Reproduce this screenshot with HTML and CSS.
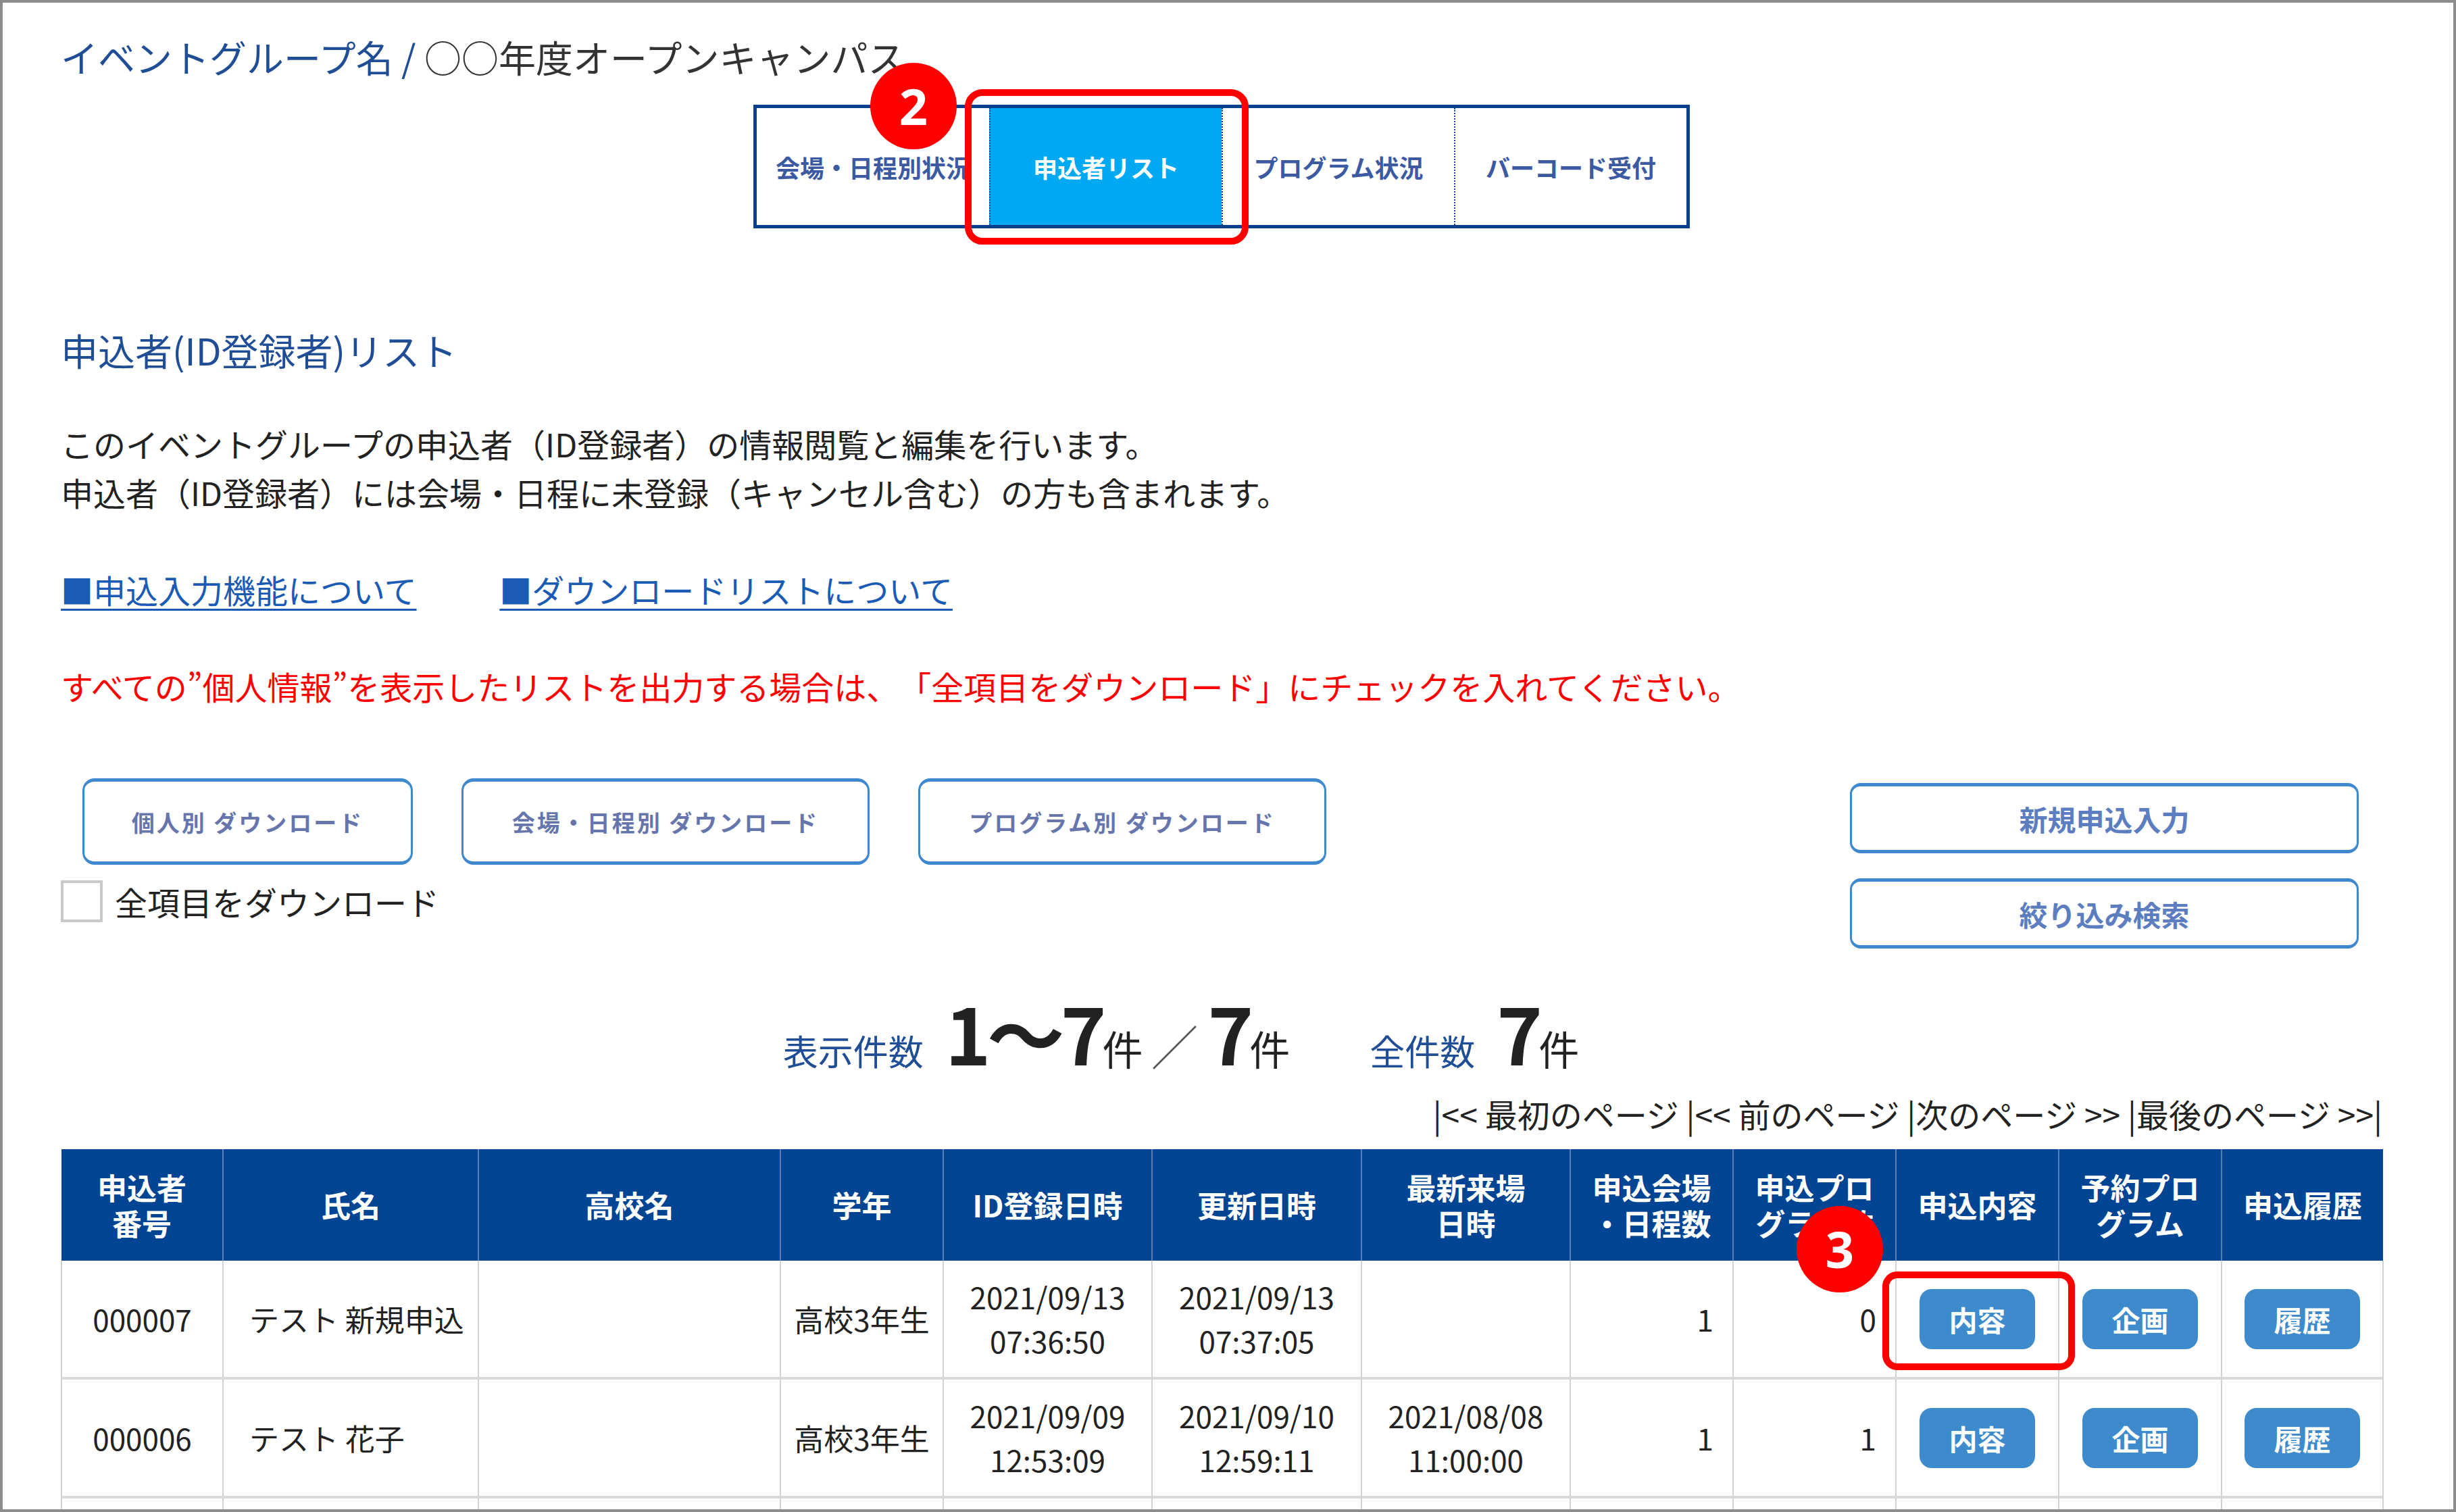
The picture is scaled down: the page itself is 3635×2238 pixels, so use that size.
FILE: index.html
```html
<!DOCTYPE html>
<html lang="ja">
<head>
    <meta charset="utf-8">
    <title>申込者リスト</title>
    <link rel="stylesheet" href="styles.css">
</head>
<body>
<div class="page">
    <!-- event name -->
    <h1 class="event-title"><span class="group">イベントグループ名 /</span> ○○年度オープンキャンパス</h1>

    <!-- menu tabs -->
    <nav class="tabs">
        <a class="tab" href="#">会場・日程別状況</a>
        <a class="tab active" href="#">申込者リスト</a>
        <a class="tab" href="#">プログラム状況</a>
        <a class="tab" href="#">バーコード受付</a>
        <span class="mark-box mark-tab"></span>
        <span class="badge badge-tab">2</span>
    </nav>

    <h2 class="sec-title">申込者(ID登録者)リスト</h2>

    <p class="lead">このイベントグループの申込者（ID登録者）の情報閲覧と編集を行います。<br>
        申込者（ID登録者）には会場・日程に未登録（キャンセル含む）の方も含まれます。</p>

    <p class="links">
        <a href="#">■申込入力機能について</a>
        <a href="#">■ダウンロードリストについて</a>
    </p>

    <p class="warn">すべての”個人情報”を表示したリストを出力する場合は、「全項目をダウンロード」にチェックを入れてください。</p>

    <!-- download / search buttons -->
    <div class="actions">
        <div class="dl-col">
            <div class="dl-row">
                <a class="btn-dl" href="#">個人別 ダウンロード</a>
                <a class="btn-dl" href="#">会場・日程別 ダウンロード</a>
                <a class="btn-dl" href="#">プログラム別 ダウンロード</a>
            </div>
            <label class="all-check"><input type="checkbox">全項目をダウンロード</label>
        </div>
        <div class="side-col">
            <a class="btn-side" href="#">新規申込入力</a>
            <a class="btn-side" href="#">絞り込み検索</a>
        </div>
    </div>

    <!-- counts -->
    <div class="count">
        <span class="lbl">表示件数</span>
        <span class="num first">1〜7</span><span class="unit">件</span>
        <span class="slash">／</span>
        <span class="num">7</span><span class="unit">件</span>
        <span class="lbl total">全件数</span>
        <span class="num first">7</span><span class="unit">件</span>
    </div>

    <div class="pager">|&lt;&lt; 最初のページ |&lt;&lt; 前のページ |次のページ &gt;&gt; |最後のページ &gt;&gt;|</div>

    <!-- applicant list -->
    <table class="list">
        <colgroup>
            <col style="width:239px"><col style="width:378px"><col style="width:447px">
            <col style="width:241px"><col style="width:309px"><col style="width:310px">
            <col style="width:309px"><col style="width:241px"><col style="width:241px">
            <col style="width:241px"><col style="width:241px"><col style="width:239px">
        </colgroup>
        <thead>
            <tr>
                <th>申込者<br>番号</th>
                <th>氏名</th>
                <th>高校名</th>
                <th>学年</th>
                <th>ID登録日時</th>
                <th>更新日時</th>
                <th>最新来場<br>日時</th>
                <th>申込会場<br>・日程数</th>
                <th>申込プロ<br>グラム数</th>
                <th>申込内容</th>
                <th>予約プロ<br>グラム</th>
                <th>申込履歴</th>
            </tr>
        </thead>
        <tbody>
            <tr>
                <td class="c">000007</td>
                <td class="name">テスト 新規申込</td>
                <td></td>
                <td class="c">高校3年生</td>
                <td class="c">2021/09/13<br>07:36:50</td>
                <td class="c">2021/09/13<br>07:37:05</td>
                <td class="c"></td>
                <td class="r">1</td>
                <td class="r">0</td>
                <td class="c">
                    <a class="btn-row marked" href="#">内容<span class="mark-box mark-row"></span><span class="badge badge-row">3</span></a>
                </td>
                <td class="c"><a class="btn-row" href="#">企画</a></td>
                <td class="c"><a class="btn-row" href="#">履歴</a></td>
            </tr>
            <tr>
                <td class="c">000006</td>
                <td class="name">テスト 花子</td>
                <td></td>
                <td class="c">高校3年生</td>
                <td class="c">2021/09/09<br>12:53:09</td>
                <td class="c">2021/09/10<br>12:59:11</td>
                <td class="c">2021/08/08<br>11:00:00</td>
                <td class="r">1</td>
                <td class="r">1</td>
                <td class="c"><a class="btn-row" href="#">内容</a></td>
                <td class="c"><a class="btn-row" href="#">企画</a></td>
                <td class="c"><a class="btn-row" href="#">履歴</a></td>
            </tr>
            <!-- next row only starts at the bottom edge -->
            <tr>
                <td></td><td></td><td></td><td></td><td></td><td></td>
                <td></td><td></td><td></td><td></td><td></td><td></td>
            </tr>
        </tbody>
    </table>
</div>
</body>
</html>
```

FILE: styles.css
```css
/* base */
body {
    margin: 0;
    font-family: "Noto Sans CJK JP", "Noto Sans", sans-serif;
    color: #222;
    background: #fff;
    text-spacing-trim: space-all;
}

a {
    text-decoration: none;
}

/* the framed page */
.page {
    box-sizing: border-box;
    height: 100vh;
    border: 4px solid #8c8c8c;
    padding: 41px 105px 0 86px;
    overflow: hidden;
}

/* event name */
.event-title {
    margin: 0;
    font-size: 55px;
    font-weight: normal;
    line-height: 76px;
    color: #333;
}
.event-title .group {
    color: #1f4e96;
}

/* menu tabs */
.tabs {
    position: relative;
    display: grid;
    grid-template-columns: repeat(4, 1fr);
    width: 1386px;
    height: 183px;
    box-sizing: border-box;
    margin: 34px auto 0;
    border: 5px solid #0a3f8e;
}
.tab {
    display: flex;
    align-items: center;
    justify-content: center;
    font-size: 36px;
    font-weight: bold;
    color: #3c5aa2;
    white-space: nowrap;
    overflow: hidden;
}
.tab + .tab {
    border-left: 2px dotted #1d4b96;
}
.tab.active {
    background: #00a9f1;
    color: #fff;
}

/* red call-out marks */
.mark-box {
    position: absolute;
    box-sizing: border-box;
    border: 10px solid #f00;
    border-radius: 26px;
    z-index: 2;
}
.mark-tab {
    left: 308px;
    top: -28px;
    width: 420px;
    height: 230px;
}
.mark-row {
    left: -55px;
    top: -26px;
    width: 285px;
    height: 146px;
    border-radius: 22px;
}
.badge {
    position: absolute;
    width: 128px;
    height: 128px;
    border-radius: 50%;
    background: #f00;
    color: #fff;
    font-family: "Noto Sans", sans-serif;
    font-size: 74px;
    font-weight: bold;
    line-height: 128px;
    text-align: center;
    z-index: 3;
}
.badge-tab {
    left: 168px;
    top: -67px;
}
.badge-row {
    left: -182px;
    top: -123px;
}

/* section heading and texts */
.sec-title {
    margin: 141px 0 0;
    font-size: 55px;
    font-weight: normal;
    line-height: 76px;
    color: #1f4e96;
}
.lead {
    margin: 65px 0 0;
    font-size: 48px;
    line-height: 72px;
}
.links {
    margin: 72px 0 0;
    font-size: 48px;
    line-height: 72px;
}
.links a {
    color: #1a5bb5;
    text-decoration: underline;
    text-decoration-thickness: 3px;
    text-underline-offset: 8px;
    margin-right: 112px;
}
.warn {
    margin: 71px 0 0;
    font-size: 48px;
    line-height: 72px;
    color: #f00;
}

/* download and search buttons */
.actions {
    display: flex;
    justify-content: space-between;
    margin-top: 101px;
}
.dl-row {
    display: flex;
    gap: 72px;
    margin-left: 32px;
}
.btn-dl {
    box-sizing: border-box;
    width: 489px;
    height: 128px;
    display: flex;
    align-items: center;
    justify-content: center;
    border: 3px solid #3d88cf;
    border-top-width: 5px;
    border-bottom-width: 5px;
    border-radius: 18px;
    font-size: 34px;
    letter-spacing: 3px;
    font-weight: bold;
    color: #6676ad;
}
.btn-dl + .btn-dl {
    width: 604px;
}
.all-check {
    display: flex;
    align-items: center;
    margin-top: 23px;
    font-size: 48px;
    line-height: 62px;
}
.all-check input {
    appearance: none;
    box-sizing: border-box;
    width: 62px;
    height: 62px;
    margin: 0 18px 0 0;
    border: 4px solid #c9c9c9;
    background: #fff;
}
.side-col {
    display: flex;
    flex-direction: column;
    gap: 37px;
    margin: 7px 35px 0 0;
}
.btn-side {
    box-sizing: border-box;
    width: 753px;
    height: 104px;
    display: flex;
    align-items: center;
    justify-content: center;
    border: 3px solid #3d88cf;
    border-top-width: 5px;
    border-bottom-width: 5px;
    border-radius: 16px;
    font-size: 42px;
    font-weight: bold;
    color: #5c7ec0;
}

/* counts */
.count {
    display: flex;
    align-items: baseline;
    justify-content: center;
    height: 125px;
    margin-top: 66px;
    padding-right: 120px;
    line-height: 1;
}
.count .lbl {
    font-size: 52px;
    color: #1f4e96;
}
.count .lbl.total {
    margin-left: 118px;
}
.count .num {
    font-size: 115px;
    font-weight: bold;
    letter-spacing: -6px;
    color: #222;
}
.count .num.first {
    margin-left: 32px;
}
.count .unit {
    font-size: 60px;
    color: #222;
}
.count .slash {
    font-size: 70px;
    font-weight: 300;
    color: #555;
    margin: 0 14px 0 12px;
}

/* paging */
.pager {
    margin-top: 17px;
    text-align: right;
    font-size: 48px;
    line-height: 72px;
    color: #222;
}

/* list table */
.list {
    width: 100%;
    margin-top: 17px;
    table-layout: fixed;
    border-collapse: collapse;
}
.list th {
    height: 165px;
    padding: 0;
    background: #004494;
    color: #fff;
    font-size: 44px;
    font-weight: bold;
    line-height: 53px;
    border-left: 2px solid #5b7db3;
}
.list th:first-child {
    border-left: none;
}
.list td {
    height: 172px;
    padding: 0;
    font-size: 44px;
    line-height: 65px;
    vertical-align: middle;
    border-left: 2px solid #d2d2d2;
    border-right: 2px solid #d2d2d2;
    border-bottom: 4px solid #d9d9d9;
}
.list td.c {
    text-align: center;
}
.list td.r {
    text-align: right;
    padding-right: 28px;
}
.list td.name {
    padding-left: 38px;
    white-space: nowrap;
}

/* buttons inside rows */
.btn-row {
    position: relative;
    display: inline-block;
    width: 171px;
    height: 89px;
    border-radius: 18px;
    background: #3d8bcd;
    color: #fff;
    font-size: 42px;
    font-weight: bold;
    line-height: 89px;
    vertical-align: middle;
}
```
